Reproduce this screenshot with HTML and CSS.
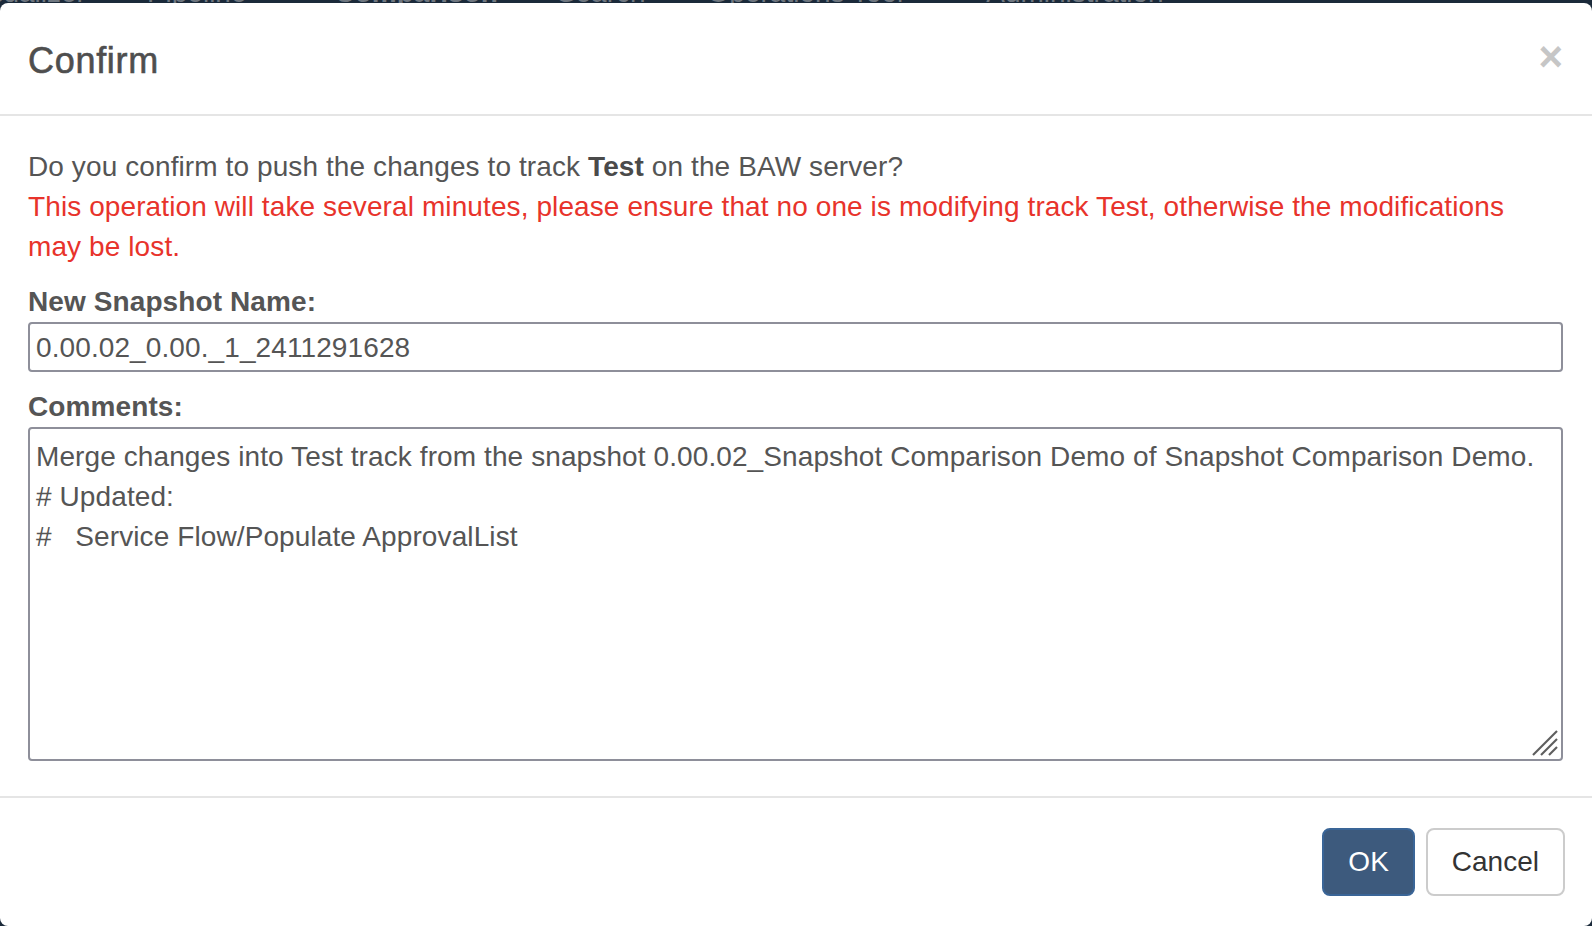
FILE: index.html
```html
<!DOCTYPE html>
<html lang="en">
<head>
<meta charset="utf-8">
<title>Confirm</title>
<link rel="stylesheet" href="styles.css">
</head>
<body>
<nav class="topnav">
  <span class="nav-item n1">Visualizer</span>
  <span class="nav-item n2">Pipeline</span>
  <span class="nav-item n3 active">Comparison</span>
  <span class="nav-item n4">Search</span>
  <span class="nav-item n5">Operations Tool</span>
  <span class="nav-item n6">Administration</span>
</nav>
<div class="modal">
  <div class="modal-header">
    <h4 class="modal-title">Confirm</h4>
    <button class="close" type="button" aria-label="Close">&times;</button>
  </div>
  <div class="modal-body">
    <p class="question">Do you confirm to push the changes to track <b>Test</b> on the BAW server?</p>
    <p class="warning">This operation will take several minutes, please ensure that no one is modifying track Test, otherwise the modifications may be lost.</p>
    <label class="field-label" for="snap">New Snapshot Name:</label>
    <input id="snap" class="field-input" type="text" value="0.00.02_0.00._1_2411291628">
    <label class="field-label" for="comments">Comments:</label>
    <div class="textarea-wrap">
      <textarea id="comments" class="field-textarea">Merge changes into Test track from the snapshot 0.00.02_Snapshot Comparison Demo of Snapshot Comparison Demo.
# Updated:
#   Service Flow/Populate ApprovalList</textarea>
      <svg class="grip" width="26" height="26" viewBox="0 0 26 26" aria-hidden="true">
        <line x1="1" y1="25" x2="25" y2="1" stroke="#5e5e5e" stroke-width="2.2"/>
        <line x1="9" y1="25" x2="25" y2="9" stroke="#5e5e5e" stroke-width="2.2"/>
        <line x1="17" y1="25" x2="25" y2="17" stroke="#5e5e5e" stroke-width="2.2"/>
      </svg>
    </div>
  </div>
  <div class="modal-footer">
    <button class="btn btn-primary" type="button">OK</button>
    <button class="btn btn-default" type="button">Cancel</button>
  </div>
</div>
</body>
</html>
```

FILE: styles.css
```css
html, body {
  margin: 0;
  padding: 0;
}

body {
  background: #1b2a3a;
  font-family: "Liberation Sans", Arial, Helvetica, sans-serif;
  color: #555;
  overflow: hidden;
}

.topnav {
  height: 3px;
  overflow: hidden;
  display: flex;
  align-items: flex-end;
  background: #1b2a3a;
}

.nav-item {
  flex: none;
  font-size: 28px;
  line-height: 28px;
  margin-bottom: -4px;
  color: #6f7780;
  white-space: nowrap;
}

.nav-item.active { font-weight: bold; }
.n1 { margin-left: -35px; }
.n2 { margin-left: 61px; }
.n3 { margin-left: 88px; }
.n4 { margin-left: 59px; }
.n5 { margin-left: 62px; }
.n6 { margin-left: 83px; }

.modal {
  background: #fff;
  border-radius: 8px;
  height: 923px;
  box-sizing: border-box;
}

.modal-header {
  display: flex;
  justify-content: space-between;
  align-items: flex-start;
  padding: 32px 29px 28px 28px;
  border-bottom: 2px solid #e5e5e5;
}

.modal-title {
  margin: 0;
  font-size: 36px;
  line-height: 51.4px;
  font-weight: 500;
  letter-spacing: 0.7px;
  color: #4e4e4e;
  -webkit-text-stroke: 0.6px #4e4e4e;
}

.close {
  background: none;
  border: 0;
  padding: 0;
  margin-top: 1px;
  font-family: "Liberation Sans", Arial, sans-serif;
  font-size: 42px;
  font-weight: bold;
  line-height: 1;
  color: #c6c6c6;
  cursor: pointer;
}

.modal-body {
  padding: 31px 29px 29px 28px;
  font-size: 28px;
  line-height: 40px;
  letter-spacing: 0.1px;
}

.question {
  margin: 0;
  color: #555;
}

.question b {
  color: #4a4a4a;
}

.warning {
  margin: 0 0 15px;
  max-width: 1500px;
  color: #e8332b;
}

.field-label {
  display: block;
  margin: 0;
  font-weight: bold;
  color: #555;
}

.field-input,
.field-textarea {
  display: block;
  width: 100%;
  box-sizing: border-box;
  border: 2px solid #8e8f9a;
  border-radius: 4px;
  font-family: "Liberation Sans", Arial, sans-serif;
  font-size: 28px;
  letter-spacing: 0.1px;
  color: #555;
  background: #fff;
  outline: none;
}

.field-input {
  height: 50px;
  padding: 2px 6px 0;
  margin: 0 0 15px;
}

.textarea-wrap {
  position: relative;
  margin-bottom: 6px;
}

.field-textarea {
  height: 334px;
  padding: 8px 6px 6px;
  line-height: 40px;
  resize: none;
  overflow: hidden;
  white-space: pre;
  margin: 0;
}

.grip {
  position: absolute;
  right: 5px;
  bottom: 5px;
}

.modal-footer {
  display: flex;
  justify-content: flex-end;
  gap: 11px;
  padding: 30px 27px 30px 28px;
  border-top: 2px solid #e5e5e5;
}

.btn {
  font-family: "Liberation Sans", Arial, sans-serif;
  font-size: 28px;
  line-height: 40px;
  padding: 12px 24px;
  border: 2px solid;
  border-radius: 8px;
  cursor: pointer;
}

.btn-primary {
  background: #3d5a7d;
  border-color: #3a6597;
  color: #fff;
}

.btn-default {
  background: #fff;
  border-color: #cccccc;
  color: #333;
}
```
